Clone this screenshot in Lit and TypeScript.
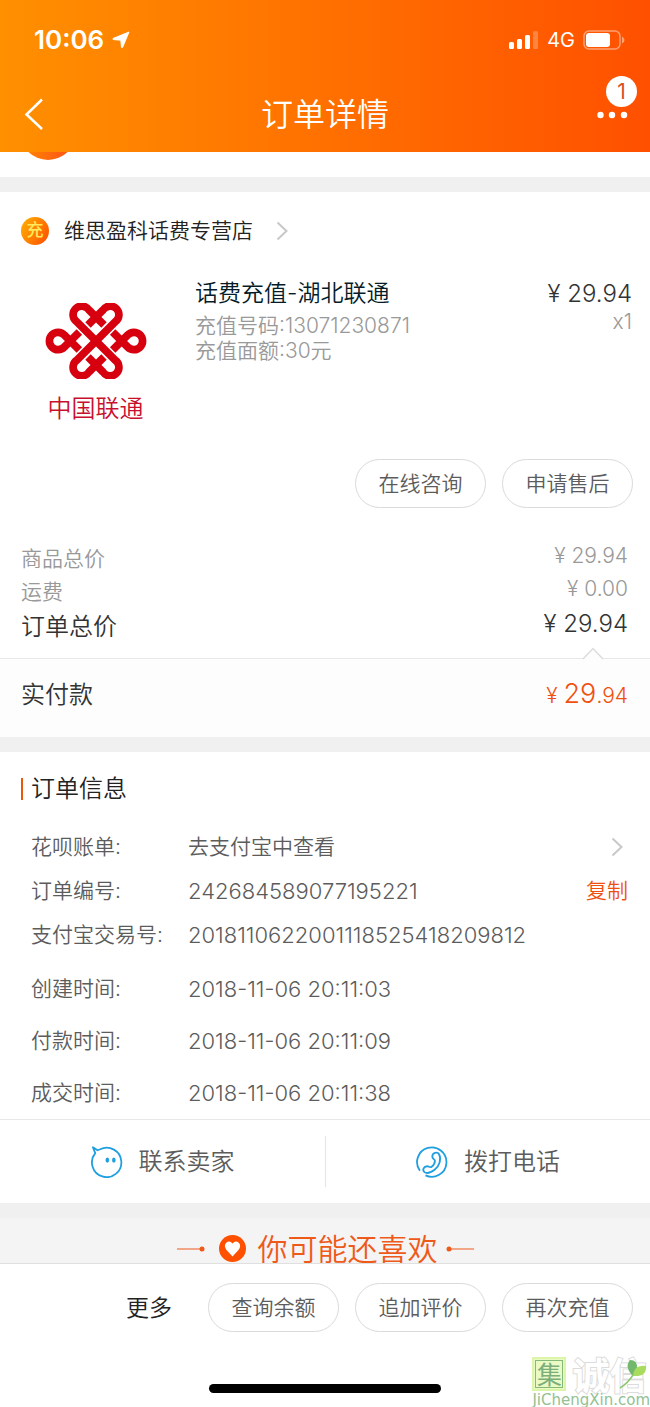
import { LitElement, html, css, svg } from "lit";
import { customElement, property } from "lit/decorators.js";

const chevronRight = html`<svg class="chevron" viewBox="0 0 12 20" aria-hidden="true">
  <path d="M1.5 1.5 10.5 10 1.5 18.5" fill="none" stroke="#c8c8c8" stroke-width="2" />
</svg>`;

const knotSide = svg`
  <path d="M307 373 262 328A26 26 0 1 0 226 364L340 478A26 26 0 1 1 304 514L259 469" />
  <path d="M233 448 188 403A26 26 0 1 0 188 439L233 394" />`;

const unicomKnot = html`<svg class="knot" viewBox="131 307 304 228" aria-hidden="true">
  <g fill="none" stroke="#d7000f" stroke-width="23">
    ${knotSide}
    <g transform="translate(566 0) scale(-1 1)">${knotSide}</g>
  </g>
</svg>`;

const chatIcon = html`<svg class="contact-icon" viewBox="0 0 98 98" aria-hidden="true">
  <path d="M13 22A45 45 0 1 0 28 10L20 13 6 4Z" fill="none" stroke="#1f9fe0" stroke-width="5.5" stroke-linejoin="round" />
  <ellipse cx="50" cy="43" rx="5.5" ry="8" fill="#1f9fe0" />
  <ellipse cx="70" cy="43" rx="5.5" ry="8" fill="#1f9fe0" />
</svg>`;

const phoneIcon = html`<svg class="contact-icon" viewBox="0 0 98 98" aria-hidden="true">
  <g fill="none" stroke="#1f9fe0" stroke-width="5.5" stroke-linejoin="round">
    <path d="M12 76A45 45 0 1 1 29 90" />
    <path d="M50 33C49 20 66 16 71 26C78 40 72 62 57 73C46 81 34 86 26 80C18 73 24 62 34 62C40 62 42 67 47 64C54 59 58 52 58 45C57 40 50 40 50 33Z" />
  </g>
</svg>`;

@customElement("pill-button")
export class PillButton extends LitElement {
  @property() label = "";

  static styles = css`
    :host {
      display: block;
    }
    .pill {
      width: 131px;
      height: 49px;
      padding: 0;
      border: 1px solid #dadada;
      border-radius: 25px;
      background: #fff;
      color: #5c5c5c;
      font: inherit;
      font-size: 21px;
    }
  `;

  render() {
    return html`<button class="pill" type="button">${this.label}</button>`;
  }
}

@customElement("app-root")
export class OrderDetail extends LitElement {
  static styles = css`
    :host {
      display: flex;
      flex-direction: column;
      min-height: 100vh;
      background: #fff;
      color: #333;
      font-family: Inter, "Noto Sans CJK SC", sans-serif;
      font-size: 21px;
      font-weight: 350;
      line-height: 32px;
    }
    * {
      box-sizing: border-box;
    }
    h1, h2, p, dl, dd, dt {
      margin: 0;
      font-weight: inherit;
    }
    svg {
      display: block;
      flex: none;
    }
    a {
      color: inherit;
      text-decoration: none;
    }
    button {
      font-family: inherit;
      font-weight: inherit;
      line-height: inherit;
    }

    .header {
      background: linear-gradient(90deg, #ff9000, #ff5000);
      color: #fff;
    }
    .status {
      display: flex;
      align-items: center;
      justify-content: space-between;
      height: 80px;
      padding: 0 25px 0 34px;
    }
    .status-side {
      display: flex;
      align-items: center;
      gap: 8px;
    }
    .clock {
      font-size: 26px;
      font-weight: 600;
    }
    .network {
      font-size: 20px;
      font-weight: 400;
    }
    .location {
      width: 18px;
      height: 18px;
    }
    .signal {
      width: 30px;
      height: 18px;
    }
    .battery {
      width: 42px;
      height: 20px;
    }
    .nav {
      display: grid;
      grid-template-columns: 1fr auto 1fr;
      align-items: center;
      height: 72px;
      padding: 0 22px 4px;
    }
    .page-title {
      padding-top: 2px;
      font-size: 32px;
      line-height: 40px;
    }
    .icon-button {
      position: relative;
      padding: 0;
      border: 0;
      background: none;
      color: inherit;
      justify-self: start;
    }
    .more {
      justify-self: end;
    }
    .back-icon {
      width: 24px;
      height: 32px;
    }
    .dots {
      width: 32px;
      height: 32px;
    }
    .badge {
      position: absolute;
      right: -9px;
      bottom: 23px;
      width: 31px;
      height: 31px;
      border-radius: 50%;
      background: #fff;
      color: #d9501e;
      font-size: 21px;
      font-weight: 400;
      line-height: 31px;
      text-align: center;
    }

    .peek {
      display: flex;
      align-items: flex-end;
      height: 25px;
      padding: 0 20px 17px;
      overflow: hidden;
    }
    .peek-disc {
      flex: none;
      width: 56px;
      height: 56px;
      border-radius: 50%;
      background: linear-gradient(90deg, #ff8a00, #ff4d1c);
    }
    .band {
      height: 15px;
      background: #f0f0f0;
    }

    .shop {
      display: flex;
      align-items: center;
      gap: 15px;
      padding: 23px 21px 0;
    }
    .shop-badge {
      width: 28px;
      height: 28px;
      border-radius: 50%;
      background: linear-gradient(120deg, #ffb400, #ff7a00 55%, #ff4a00);
      color: #ffe95c;
      font-size: 17px;
      font-weight: 500;
      line-height: 27px;
      text-align: center;
    }
    .shop-name {
      margin-right: 8px;
      color: #222;
    }
    .chevron {
      width: 12px;
      height: 20px;
    }
    .product {
      display: flex;
      gap: 25px;
      padding: 18px 18px 0 21px;
    }
    .product-image {
      display: flex;
      flex-direction: column;
      align-items: center;
      gap: 14px;
      width: 149px;
      height: 173px;
      padding-top: 38px;
      color: #c8102e;
      font-size: 24px;
    }
    .knot {
      width: 102px;
      height: 76px;
    }
    .product-text {
      flex: 1;
      padding-top: 12px;
      color: #999;
      line-height: 25px;
    }
    .product-name {
      color: #051b28;
      font-size: 23px;
      line-height: 32px;
      margin-bottom: 4px;
    }
    .product-price {
      padding-top: 13px;
      color: #999;
      line-height: 24px;
      text-align: right;
    }
    .price {
      color: #333;
      font-size: 24px;
      line-height: 32px;
    }
    .actions {
      display: flex;
      justify-content: flex-end;
      gap: 16px;
      padding: 21px 17px 34px;
    }

    .summary {
      padding: 0 22px 12px 21px;
    }
    .summary-row {
      display: flex;
      justify-content: space-between;
      color: #999;
      line-height: 33px;
    }
    .summary-value {
      line-height: 27px;
    }
    .summary-total {
      color: #333;
      font-size: 24px;
      line-height: 38px;
    }
    .summary-total .summary-value {
      line-height: 32px;
    }
    .paid {
      position: relative;
      display: flex;
      align-items: center;
      justify-content: space-between;
      height: 79px;
      padding: 0 22px 6px 21px;
      border-top: 1px solid #e8e8e8;
      background: #fdfdfd;
      font-size: 24px;
    }
    .caret {
      position: absolute;
      top: -12px;
      right: 46px;
      width: 22px;
      height: 13px;
    }
    .paid-value {
      color: #f0500f;
      font-size: 21px;
    }
    .paid-major {
      font-size: 27px;
    }

    .info {
      padding: 21px 22px 0 21px;
    }
    .info-title {
      display: flex;
      align-items: center;
      gap: 8px;
      margin-bottom: 20px;
      color: #222;
      font-size: 24px;
    }
    .info-title::before {
      content: "";
      width: 2px;
      height: 22px;
      background: #e8590c;
    }
    .info-list {
      padding-left: 10px;
      color: #5c5c5c;
      line-height: 44px;
    }
    .info-times {
      padding-top: 6px;
      line-height: 52px;
    }
    .info-row {
      display: grid;
      grid-template-columns: 157px 1fr auto;
      align-items: center;
    }
    .info-value {
      font-size: 22px;
    }
    .info-value.cjk {
      font-size: 21px;
    }
    .info-row .chevron {
      margin-right: 5px;
    }
    .copy {
      padding: 0;
      border: 0;
      background: none;
      color: #f0500f;
      font-size: 21px;
    }

    .contacts {
      display: grid;
      grid-template-columns: 1fr 1fr;
      padding: 16px 0;
      border-top: 1px solid #e8e8e8;
    }
    .contact {
      display: flex;
      align-items: center;
      justify-content: center;
      gap: 16px;
      height: 51px;
      color: #5c5c5c;
      font-size: 24px;
    }
    .contact + .contact {
      border-left: 1px solid #e4e4e4;
    }
    .contact-icon {
      width: 32px;
      height: 32px;
    }
    .suggest {
      display: flex;
      align-items: center;
      justify-content: center;
      gap: 8px;
      height: 45px;
      padding-top: 16px;
      background: #f4f4f4;
      color: #ee5a1a;
      font-size: 30px;
      line-height: 28px;
    }
    .flourish {
      width: 28px;
      height: 6px;
    }
    .flourish.end {
      transform: rotate(180deg);
    }
    .heart {
      width: 27px;
      height: 27px;
      margin: 0 4px 0 6px;
    }

    .footer {
      position: relative;
      margin-top: auto;
      padding-bottom: 14px;
      border-top: 1px solid #e0e0e0;
      background: #fff;
    }
    .footer-actions {
      display: flex;
      align-items: center;
      justify-content: flex-end;
      gap: 16px;
      padding: 19px 17px 52px;
    }
    .footer-more {
      margin-right: 20px;
      padding: 0;
      border: 0;
      background: none;
      color: #222;
      font-size: 23px;
    }
    .home {
      width: 232px;
      height: 9px;
      margin: 0 auto;
      border-radius: 5px;
      background: #000;
    }
    .mark {
      position: absolute;
      right: 0;
      bottom: 0;
      color: #93c193;
      font-family: "DejaVu Sans", sans-serif;
      font-size: 15px;
      font-weight: 400;
      line-height: 14px;
    }
    .mark-top {
      display: flex;
      align-items: center;
      gap: 6px;
      padding-bottom: 2px;
      font-family: "Noto Sans CJK SC", sans-serif;
    }
    .mark-seal {
      width: 34px;
      height: 34px;
      border: 2px solid #dcf5a8;
      outline: 1px solid #86b878;
      outline-offset: -4px;
      background: #e9fac4;
      color: #7cae7c;
      font-size: 25px;
      line-height: 29px;
      text-align: center;
    }
    .mark-name {
      color: #fff;
      font-size: 37px;
      font-weight: 700;
      line-height: 34px;
      paint-order: stroke;
      -webkit-text-stroke: 2px #dcdcdc;
    }
    .mark-leaf {
      position: absolute;
      top: 0;
      right: 3px;
      width: 28px;
      height: 32px;
    }
  `;

  private times = [
    ["创建时间:", "2018-11-06 20:11:03"],
    ["付款时间:", "2018-11-06 20:11:09"],
    ["成交时间:", "2018-11-06 20:11:38"],
  ];

  private renderHeader() {
    return html`<header class="header">
      <div class="status">
        <div class="status-side">
          <span class="clock">10:06</span>
          <svg class="location" viewBox="0 0 18 18" aria-hidden="true">
            <path d="M17 1 10.500 16.500 9.500 16.500 8.800 9.200 1 8.500 1 7.500Z" fill="#fff" stroke="#fff" stroke-linejoin="round" />
          </svg>
        </div>
        <div class="status-side">
          <svg class="signal" viewBox="0 0 30 18" fill="#fff" aria-hidden="true">
            <rect x="0" y="11" width="5" height="7" rx="1.500" />
            <rect x="8" y="8" width="5" height="10" rx="1.500" />
            <rect x="16" y="4" width="5" height="14" rx="1.500" />
            <rect x="24" y="0" width="5" height="18" rx="1.500" opacity=".25" />
          </svg>
          <span class="network">4G</span>
          <svg class="battery" viewBox="0 0 42 20" aria-hidden="true">
            <rect x="1" y="1" width="36" height="18" rx="5" fill="none" stroke="#fff" stroke-opacity=".45" stroke-width="1.500" />
            <rect x="3" y="3" width="24" height="14" rx="3" fill="#fff" />
            <path d="M39 6.500Q41.500 8 41.500 10T39 13.500Z" fill="#fff" fill-opacity=".45" />
          </svg>
        </div>
      </div>
      <nav class="nav">
        <button class="icon-button" type="button" aria-label="返回">
          <svg class="back-icon" viewBox="0 0 24 32" aria-hidden="true">
            <path d="M20 1.500 4.500 16.500 20 31" fill="none" stroke="#fff" stroke-width="2.500" />
          </svg>
        </button>
        <h1 class="page-title">订单详情</h1>
        <button class="icon-button more" type="button" aria-label="更多选项">
          <svg class="dots" viewBox="0 0 32 32" fill="#fff" aria-hidden="true">
            <circle cx="4.500" cy="17" r="3.200" /><circle cx="16" cy="17" r="3.200" /><circle cx="28" cy="17" r="3.200" />
          </svg>
          <span class="badge">1</span>
        </button>
      </nav>
    </header>`;
  }

  render() {
    return html`
      ${this.renderHeader()}
      <div class="peek"><div class="peek-disc"></div></div>
      <div class="band"></div>

      <a class="shop" href="#shop">
        <span class="shop-badge">充</span>
        <span class="shop-name">维思盈科话费专营店</span>
        ${chevronRight}
      </a>
      <section class="product">
        <div class="product-image">${unicomKnot}<span>中国联通</span></div>
        <div class="product-text">
          <h2 class="product-name">话费充值-湖北联通</h2>
          <p>充值号码:13071230871</p>
          <p>充值面额:30元</p>
        </div>
        <div class="product-price">
          <p class="price">¥ 29.94</p>
          <p>x1</p>
        </div>
      </section>
      <div class="actions">
        <pill-button label="在线咨询"></pill-button>
        <pill-button label="申请售后"></pill-button>
      </div>

      <dl class="summary">
        <div class="summary-row"><dt>商品总价</dt><dd class="summary-value">¥ 29.94</dd></div>
        <div class="summary-row"><dt>运费</dt><dd class="summary-value">¥ 0.00</dd></div>
        <div class="summary-row summary-total"><dt>订单总价</dt><dd class="summary-value">¥ 29.94</dd></div>
      </dl>
      <div class="paid">
        <svg class="caret" viewBox="0 0 22 13" aria-hidden="true">
          <path d="M1 12 11 1.500 21 12V13H1Z" fill="#fdfdfd" />
          <path d="M1 12 11 1.500 21 12" fill="none" stroke="#dcdcdc" stroke-width="1.500" />
        </svg>
        <span>实付款</span>
        <span class="paid-value">¥ <span class="paid-major">29</span>.94</span>
      </div>
      <div class="band"></div>

      <section class="info">
        <h2 class="info-title">订单信息</h2>
        <dl class="info-list">
          <div class="info-row"><dt>花呗账单:</dt><dd class="info-value cjk">去支付宝中查看</dd>${chevronRight}</div>
          <div class="info-row">
            <dt>订单编号:</dt><dd class="info-value">242684589077195221</dd>
            <button class="copy" type="button">复制</button>
          </div>
          <div class="info-row"><dt>支付宝交易号:</dt><dd class="info-value">2018110622001118525418209812</dd></div>
        </dl>
        <dl class="info-list info-times">
          ${this.times.map(
            ([label, value]) => html`<div class="info-row"><dt>${label}</dt><dd class="info-value">${value}</dd></div>`
          )}
        </dl>
      </section>
      <div class="contacts">
        <a class="contact" href="#chat">${chatIcon}<span>联系卖家</span></a>
        <a class="contact" href="#call">${phoneIcon}<span>拨打电话</span></a>
      </div>
      <div class="band"></div>
      <div class="suggest">
        <svg class="flourish" viewBox="0 0 28 6" aria-hidden="true">
          <path d="M0 3H25" stroke="#ee5a1a" /><circle cx="25" cy="3" r="2.500" fill="#ee5a1a" />
        </svg>
        <svg class="heart" viewBox="0 0 27 27" aria-hidden="true">
          <circle cx="13.500" cy="13.500" r="13.500" fill="#ff5000" />
          <path d="M13.500 21.500 7.500 15Q4.500 11 7 8Q10.500 5 13.500 8.500Q16.500 5 20 8Q22.500 11 19.500 15Z" fill="#fff" />
        </svg>
        <span>你可能还喜欢</span>
        <svg class="flourish end" viewBox="0 0 28 6" aria-hidden="true">
          <path d="M0 3H25" stroke="#ee5a1a" /><circle cx="25" cy="3" r="2.500" fill="#ee5a1a" />
        </svg>
      </div>

      <footer class="footer">
        <div class="footer-actions">
          <button class="footer-more" type="button">更多</button>
          <pill-button label="查询余额"></pill-button>
          <pill-button label="追加评价"></pill-button>
          <pill-button label="再次充值"></pill-button>
        </div>
        <div class="home"></div>
        <div class="mark">
          <div class="mark-top">
            <span class="mark-seal">集</span>
            <span class="mark-name">诚信</span>
          </div>
          <svg class="mark-leaf" viewBox="0 0 28 32" aria-hidden="true">
            <path d="M14 19Q5 10 11 3Q19 3 18 12Z" fill="#72b86c" />
            <path d="M14 19Q15 7 27 9Q28 20 14 19Z" fill="#a9dc5e" />
            <path d="M14 18Q9 26 1 31" fill="none" stroke="#8cc870" stroke-width="1.500" />
          </svg>
          <span>JiChengXin.com</span>
        </div>
      </footer>
    `;
  }
}
